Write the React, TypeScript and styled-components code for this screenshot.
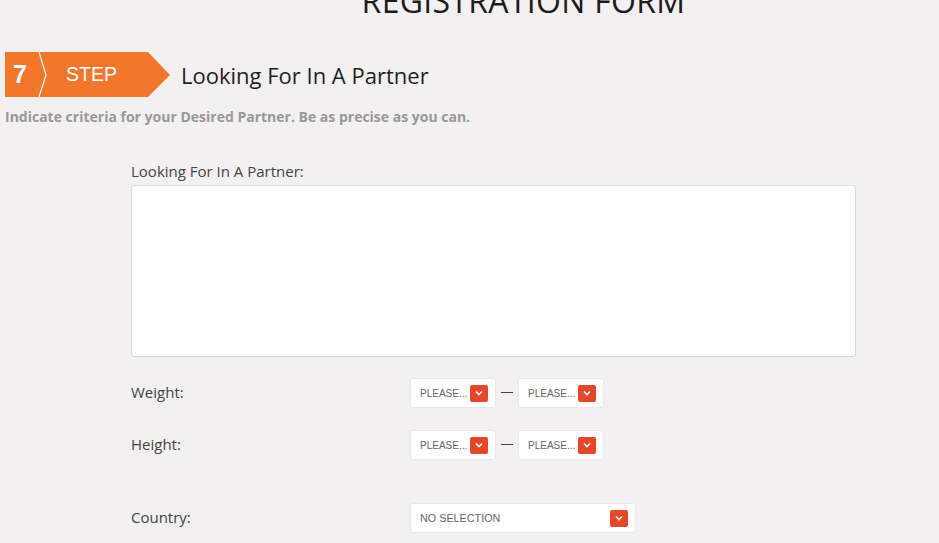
import React from 'react';
import styled, { createGlobalStyle } from 'styled-components';

const GlobalStyle = createGlobalStyle`
  body {
    margin: 0;
    background: #f2f0f1;
    font-family: "Open Sans", "DejaVu Sans", sans-serif;
    overflow: hidden;
  }
`;

const Page = styled.div`
  width: 939px;
  height: 543px;
  overflow: hidden;
`;

const Title = styled.h1`
  margin: -15px 0 0 108px;
  text-align: center;
  font-size: 32px;
  font-weight: 400;
  line-height: 32px;
  color: #1c1c1c;
  letter-spacing: 0.3px;
`;

const StepRow = styled.div`
  display: flex;
  align-items: center;
  margin: 35px 0 0 5px;
  height: 45px;
`;

const Badge = styled.div`
  position: relative;
  width: 165px;
  height: 45px;
  flex-shrink: 0;
`;

const BadgeShape = styled.svg`
  display: block;
`;

const BadgeText = styled.span<{ $left: number; $size: number; $bold?: boolean }>`
  position: absolute;
  top: 0;
  left: ${(p) => p.$left}px;
  line-height: 45px;
  font-family: "Liberation Sans", Arial, sans-serif;
  font-size: ${(p) => p.$size}px;
  font-weight: ${(p) => (p.$bold ? 700 : 400)};
  color: #fff;
`;

const StepTitle = styled.h2`
  margin: 0 0 0 11px;
  font-size: 22px;
  font-weight: 400;
  color: #1f1f1f;
`;

const Intro = styled.p`
  margin: 10px 0 0 5px;
  font-size: 14px;
  font-weight: 700;
  color: #9b9797;
`;

const Form = styled.div`
  margin: 35px 0 0 131px;
  width: 725px;
`;

const FieldLabel = styled.label`
  display: block;
  font-size: 15px;
  color: #444;
  line-height: 20px;
  margin-bottom: 4px;
`;

const TextArea = styled.div`
  box-sizing: border-box;
  height: 172px;
  background: #fff;
  border: 1px solid #dcdadb;
  border-radius: 3px;
`;

const Row = styled.div<{ $top: number }>`
  display: grid;
  grid-template-columns: 279px auto;
  align-items: center;
  margin-top: ${(p) => p.$top}px;
  height: 30px;
`;

const RowLabel = styled.span`
  font-size: 15px;
  color: #444;
  line-height: 20px;
  margin-top: -3px;
`;

const Range = styled.div`
  display: flex;
  align-items: center;
`;

const Dash = styled.span`
  width: 12px;
  height: 1px;
  background: #444;
  margin: 0 5px 2px 5px;
`;

const Select = styled.div<{ $width: number }>`
  box-sizing: border-box;
  width: ${(p) => p.$width}px;
  height: 30px;
  background: #fff;
  border: 1px solid #e9e7e8;
  border-radius: 3px;
  display: flex;
  align-items: center;
  justify-content: space-between;
  padding: 0 7px 0 9px;
`;

const SelectText = styled.span<{ $size: number }>`
  font-family: "Liberation Sans", Arial, sans-serif;
  font-size: ${(p) => p.$size}px;
  color: #666;
  white-space: nowrap;
  overflow: hidden;
`;

const Arrow = styled.span`
  width: 18px;
  height: 17px;
  flex-shrink: 0;
  background: #e5472a;
  border-radius: 2px;
  display: flex;
  align-items: center;
  justify-content: center;
`;

const Chevron = () => (
  <svg width="8" height="6" viewBox="0 0 8 6">
    <path d="M1 1.5 L4 4.5 L7 1.5" fill="none" stroke="#fff" strokeWidth="1.6" />
  </svg>
);

const Dropdown = ({ text, width, size = 10 }: { text: string; width: number; size?: number }) => (
  <Select $width={width}>
    <SelectText $size={size}>{text}</SelectText>
    <Arrow>
      <Chevron />
    </Arrow>
  </Select>
);

const App = () => {
  return (
    <Page>
      <GlobalStyle />
      <Title>REGISTRATION FORM</Title>
      <StepRow>
        <Badge>
          <BadgeShape width="165" height="45" viewBox="0 0 165 45">
            <polygon points="0,0 143,0 165,23 143,45 0,45" fill="#f2772d" />
            <polyline points="34,0 41,23 34,45" fill="none" stroke="#fff" strokeWidth="1.2" />
          </BadgeShape>
          <BadgeText $left={8} $size={25} $bold>7</BadgeText>
          <BadgeText $left={61} $size={19.5}>STEP</BadgeText>
        </Badge>
        <StepTitle>Looking For In A Partner</StepTitle>
      </StepRow>
      <Intro>Indicate criteria for your Desired Partner. Be as precise as you can.</Intro>
      <Form>
        <FieldLabel>Looking For In A Partner:</FieldLabel>
        <TextArea />
        <Row $top={21}>
          <RowLabel>Weight:</RowLabel>
          <Range>
            <Dropdown text="PLEASE..." width={86} />
            <Dash />
            <Dropdown text="PLEASE..." width={86} />
          </Range>
        </Row>
        <Row $top={22}>
          <RowLabel>Height:</RowLabel>
          <Range>
            <Dropdown text="PLEASE..." width={86} />
            <Dash />
            <Dropdown text="PLEASE..." width={86} />
          </Range>
        </Row>
        <Row $top={43}>
          <RowLabel>Country:</RowLabel>
          <Range>
            <Dropdown text="NO SELECTION" width={226} size={10.8} />
          </Range>
        </Row>
      </Form>
    </Page>
  );
};

export default App;
